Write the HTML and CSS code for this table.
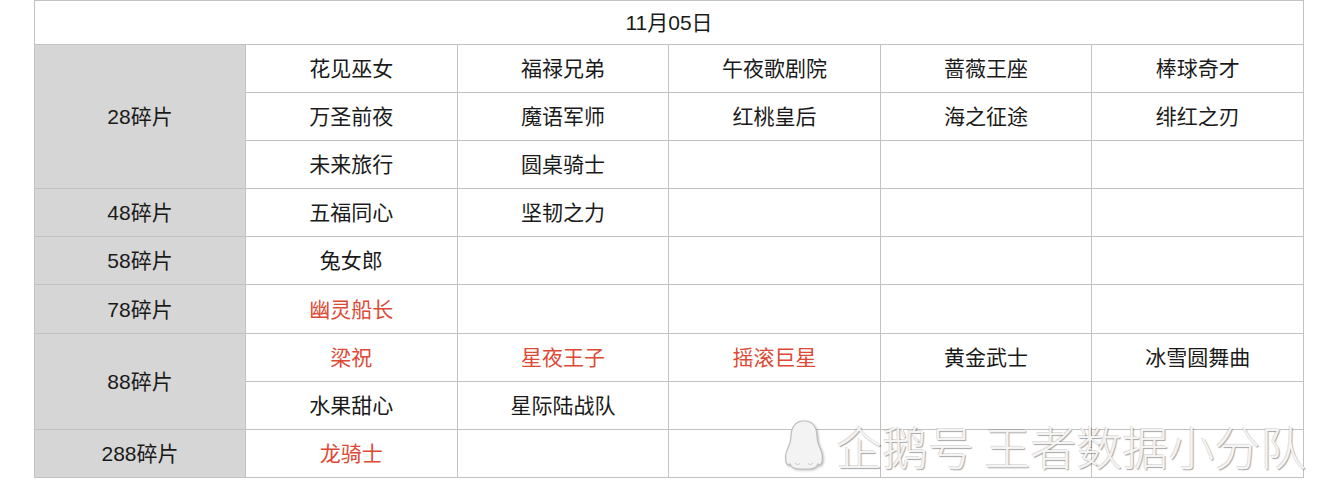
FILE: index.html
```html
<!DOCTYPE html>
<html lang="zh-CN">
<head>
<meta charset="utf-8">
<title>11月05日</title>
<link rel="stylesheet" href="styles.css">
</head>
<body>
<div class="page">
<table class="grid">
  <colgroup>
    <col class="c-label"><col class="c"><col class="c"><col class="c"><col class="c"><col class="c">
  </colgroup>
  <tr class="head"><td colspan="6">11月05日</td></tr>
  <tr><td class="label" rowspan="3">28碎片</td><td>花见巫女</td><td>福禄兄弟</td><td>午夜歌剧院</td><td>蔷薇王座</td><td>棒球奇才</td></tr>
  <tr><td>万圣前夜</td><td>魔语军师</td><td>红桃皇后</td><td>海之征途</td><td>绯红之刃</td></tr>
  <tr><td>未来旅行</td><td>圆桌骑士</td><td></td><td></td><td></td></tr>
  <tr><td class="label">48碎片</td><td>五福同心</td><td>坚韧之力</td><td></td><td></td><td></td></tr>
  <tr><td class="label">58碎片</td><td>兔女郎</td><td></td><td></td><td></td><td></td></tr>
  <tr><td class="label">78碎片</td><td class="red">幽灵船长</td><td></td><td></td><td></td><td></td></tr>
  <tr><td class="label" rowspan="2">88碎片</td><td class="red">梁祝</td><td class="red">星夜王子</td><td class="red">摇滚巨星</td><td>黄金武士</td><td>冰雪圆舞曲</td></tr>
  <tr><td>水果甜心</td><td>星际陆战队</td><td></td><td></td><td></td></tr>
  <tr><td class="label">288碎片</td><td class="red">龙骑士</td><td></td><td></td><td></td><td></td></tr>
</table>
<div class="watermark">
  <svg class="penguin" width="42" height="52" viewBox="0 0 42 52">
    <path d="M21 2 C11 2 8 10 8 18 C8 22 7 25 5 29 C3 33 2 38 3 43 C4 46 6 47 7 45 C8 48 12 50 16 50 L26 50 C30 50 34 48 35 45 C36 47 38 46 39 43 C40 38 39 33 37 29 C35 25 34 22 34 18 C34 10 31 2 21 2 Z" fill="#f3f3f3" stroke="#bdbdbd" stroke-width="1.2"/>
    <path d="M12 44 C14 46 16 46 17 44 M25 44 C26 46 28 46 30 44" fill="none" stroke="#c8c8c8" stroke-width="1"/>
  </svg>
  <span class="wm-text">企鹅号 王者数据小分队</span>
</div>
</div>
</body>
</html>
```

FILE: styles.css
```css
html, body {
  margin: 0;
  padding: 0;
  background: #ffffff;
}

.page {
  position: relative;
  width: 1334px;
  height: 494px;
  overflow: hidden;
}

.grid {
  margin-left: 34px;
  border-collapse: collapse;
  table-layout: fixed;
  width: 1269px;
  font-family: "Liberation Sans", "Noto Sans CJK SC", sans-serif;
  font-size: 21px;
  color: #1a1a1a;
}

.c-label { width: 211px; }
.c { width: 211.6px; }

.grid td {
  border: 1px solid #c2c2c2;
  height: 47.2px;
  padding: 0;
  text-align: center;
  vertical-align: middle;
  line-height: 25px;
}

.grid .head td {
  height: 42.5px;
}

.grid td.label {
  background: #d6d6d6;
}

.grid td.red {
  color: #dc4a36;
}

.watermark {
  position: absolute;
  left: 783px;
  top: 417px;
  display: flex;
  align-items: center;
  gap: 11px;
}

.penguin {
  display: block;
  filter: drop-shadow(1px 1px 1px rgba(0,0,0,0.25));
}

.wm-text {
  font-family: "Noto Sans CJK SC", sans-serif;
  font-weight: 300;
  font-size: 46px;
  line-height: 56px;
  color: #f4f4f4;
  white-space: nowrap;
  text-shadow: 1px 1px 1px rgba(0,0,0,0.35), -1px -1px 0 rgba(0,0,0,0.12);
}
```
